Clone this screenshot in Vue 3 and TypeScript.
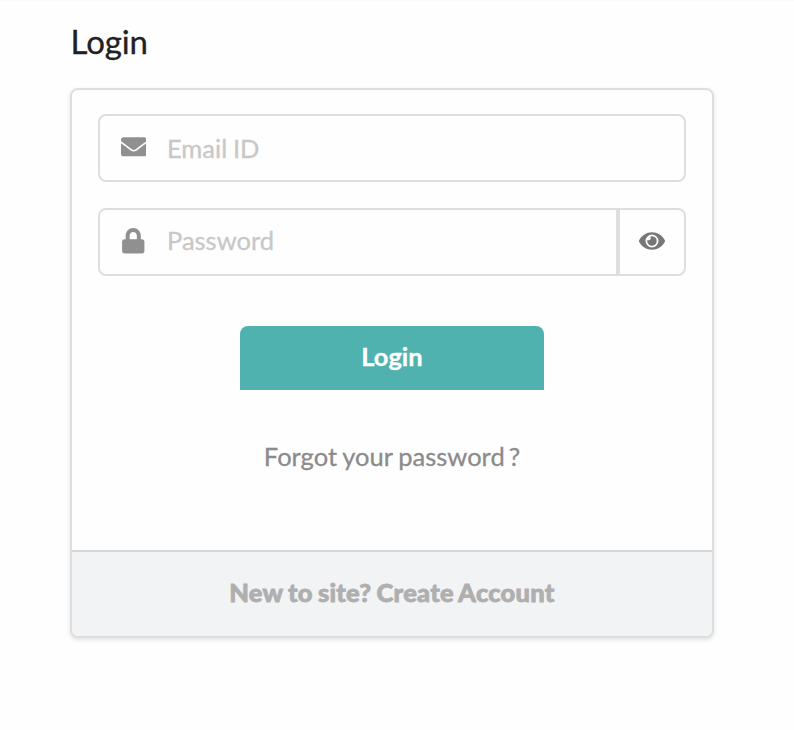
<script setup lang="ts">
import { ref } from 'vue'

const email = ref('')
const password = ref('')
const visible = ref(false)
</script>

<template>
  <main class="page">
    <h1 class="title">Login</h1>
    <form class="card" @submit.prevent>
      <div class="body">
        <label class="field">
          <svg class="icon envelope" viewBox="0 0 512 512" aria-hidden="true">
            <path d="M502.3 190.8c3.9-3.1 9.7-.2 9.7 4.7V400c0 26.5-21.5 48-48 48H48c-26.5 0-48-21.5-48-48V195.600c0-5 5.700-7.800 9.700-4.700 22.400 17.400 52.100 39.500 154.100 113.600 21.100 15.400 56.700 47.800 92.200 47.600 35.700.3 72-32.800 92.300-47.600 102-74.100 131.600-96.300 154-113.700zM256 320c23.200.4 56.600-29.200 73.400-41.400 132.700-96.300 142.800-104.700 173.400-128.700 5.800-4.500 9.200-11.500 9.200-18.900v-19c0-26.500-21.500-48-48-48H48c-26.500 0-48 21.500-48 48v19c0 7.400 3.400 14.300 9.200 18.900 30.600 23.900 40.700 32.400 173.400 128.700 16.800 12.200 50.200 41.800 73.400 41.400z" />
          </svg>
          <input v-model="email" class="input email" type="text" placeholder="Email ID" />
        </label>
        <div class="group">
          <label class="field joined">
            <svg class="icon lock" viewBox="0 0 448 512" aria-hidden="true">
              <path d="M400 224h-24v-72C376 68.200 307.800 0 224 0S72 68.200 72 152v72H48c-26.500 0-48 21.500-48 48v192c0 26.500 21.500 48 48 48h352c26.500 0 48-21.500 48-48V272c0-26.500-21.500-48-48-48zm-104 0H152v-72c0-39.700 32.300-72 72-72s72 32.300 72 72v72z" />
            </svg>
            <input v-model="password" class="input" :type="visible ? 'text' : 'password'" placeholder="Password" />
          </label>
          <button class="toggle" type="button" aria-label="Show password" @click="visible = !visible">
            <svg class="eye" viewBox="0 0 576 512" aria-hidden="true">
              <path d="M572.52 241.4C518.29 135.59 410.93 64 288 64S57.68 135.64 3.48 241.41a32.35 32.35 0 0 0 0 29.19C57.71 376.41 165.07 448 288 448s230.32-71.64 284.52-177.41a32.35 32.35 0 0 0 0-29.19zM288 400a144 144 0 1 1 144-144 143.93 143.93 0 0 1-144 144z" />
              <path d="M288 151a105 105 0 1 1-101 76a43 43 0 1 0 60-67a105 105 0 0 1 41-9z" />
            </svg>
          </button>
        </div>
        <button class="submit" type="submit">Login</button>
        <a class="forgot">Forgot your password<span class="mark"> ?</span></a>
      </div>
      <footer class="footer"><a>New to site? Create Account</a></footer>
    </form>
  </main>
</template>

<style>
body {
  background: #fefefe;
}
</style>

<style scoped>
* {
  box-sizing: border-box;
}
.page {
  height: 730px;
  padding: 20px 80px 0 70px;
  border-top: 1px solid #fafafa;
  font-family: Lato, sans-serif;
  font-size: 25.5px;
  word-spacing: -0.7px;
}
.title {
  margin: 0;
  height: 67px;
  padding-left: 0.5px;
  font-size: 33px;
  line-height: 40px;
  font-weight: 400;
  letter-spacing: -0.1px;
  color: #212121;
  -webkit-text-stroke: 0.3px #212121;
}
.card {
  width: 644px;
  height: 550px;
  display: flex;
  flex-direction: column;
  border: 2px solid #dedede;
  border-radius: 8px;
  background: #fefefe;
  box-shadow: 0 2px 4px rgba(34, 36, 38, 0.13);
}
.body {
  height: 460px;
  padding: 24px 26px 0;
  display: flex;
  flex-direction: column;
  align-items: center;
}
.field {
  width: 588px;
  height: 68px;
  padding-left: 20px;
  display: flex;
  align-items: center;
  border: 2px solid #dedede;
  border-radius: 8px;
}
.icon {
  flex: none;
  fill: #909090;
}
.envelope {
  width: 25.5px;
  height: 25.5px;
  margin: 0 21px 2.5px 0.5px;
}
.lock {
  width: 22.5px;
  height: 25.5px;
  margin: 0 22.5px 2.5px 2px;
}
.input {
  flex: 1;
  min-width: 0;
  height: 40px;
  padding: 0 0 5px;
  border: 0;
  outline: 0;
  background: transparent;
  font: inherit;
  letter-spacing: inherit;
  word-spacing: inherit;
  color: #222;
}
.email {
  padding: 0 0 1px;
}
.input::placeholder {
  color: #c8c8c8;
  opacity: 1;
  -webkit-text-stroke: 0.3px #c8c8c8;
}
.group {
  display: flex;
  margin-top: 26px;
}
.joined {
  width: 520px;
  border-radius: 8px 0 0 8px;
}
.toggle {
  width: 68px;
  height: 68px;
  padding: 0 0 2px;
  display: flex;
  align-items: center;
  justify-content: center;
  border: 2px solid #dedede;
  border-radius: 0 8px 8px 0;
  background: transparent;
}
.eye {
  width: 26px;
  height: 26px;
  fill: #777;
}
.submit {
  width: 304px;
  height: 64px;
  margin-top: 50px;
  padding: 0 0 5px;
  border: 0;
  border-radius: 8px 8px 0 0;
  background: #50b2ae;
  color: #fff;
  font: inherit;
  font-weight: 700;
  -webkit-text-stroke: 0.3px #fff;
}
.forgot {
  margin-top: 50px;
  line-height: 32px;
  color: #8b8b8b;
  -webkit-text-stroke: 0.3px #8b8b8b;
}
.mark {
  word-spacing: -2.5px;
}
.footer {
  flex: 1;
  display: flex;
  align-items: center;
  justify-content: center;
  padding-bottom: 4px;
  border-top: 2px solid #d5d6d7;
  border-radius: 0 0 6px 6px;
  background: #f2f3f5;
  font-weight: 900;
  letter-spacing: 0.25px;
  word-spacing: -1.2px;
  color: #afafaf;
  -webkit-text-stroke: 0.8px #afafaf;
}
</style>
